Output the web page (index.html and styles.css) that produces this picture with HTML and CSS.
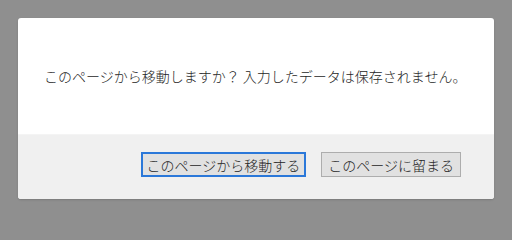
FILE: index.html
```html
<!DOCTYPE html>
<html lang="ja">
<head>
<meta charset="utf-8">
<link rel="stylesheet" href="styles.css">
</head>
<body>
<div class="dialog">
  <div class="message">このページから移動しますか？ 入力したデータは保存されません。</div>
  <div class="footer">
    <button class="btn btn-primary">このページから移動する</button>
    <button class="btn">このページに留まる</button>
  </div>
</div>
</body>
</html>
```
FILE: styles.css
```css
html, body {
  margin: 0;
  padding: 0;
}
html {
  background: #8f8f8f;
  height: 218px;
  overflow: hidden;
}
body {
  background: #8f8f8f;
  width: 512px;
  height: 218px;
  padding: 18px;
  box-sizing: border-box;
  font-family: "Noto Sans CJK JP", "Noto Sans", sans-serif;
}
.dialog {
  width: 476px;
  height: 181px;
  background: #ffffff;
  border-radius: 3px;
  overflow: hidden;
  display: flex;
  flex-direction: column;
  box-shadow: 0 1px 2px rgba(0,0,0,0.15);
}
.message {
  height: 116px;
  display: flex;
  align-items: center;
  padding-left: 26px;
  font-size: 14px;
  font-weight: 300;
  color: #1e1e1e;
  white-space: nowrap;
}
.footer {
  flex: 1;
  background: #f0f0f0;
  border-top: 1px solid #f4f4f4;
  display: flex;
  justify-content: flex-end;
  align-items: flex-start;
  gap: 15px;
  padding: 17px 33px 0 0;
}
.btn {
  height: 25px;
  box-sizing: border-box;
  font-family: "Noto Sans CJK JP", "Noto Sans", sans-serif;
  font-size: 14px;
  font-weight: 300;
  line-height: 1;
  color: #1e1e1e;
  background: #e1e1e1;
  border: 1px solid #adadad;
  border-radius: 0;
  padding: 0 6px;
  margin: 0;
}
.btn-primary {
  border: 2px solid #2b78d9;
  padding: 0 4px;
}
```
